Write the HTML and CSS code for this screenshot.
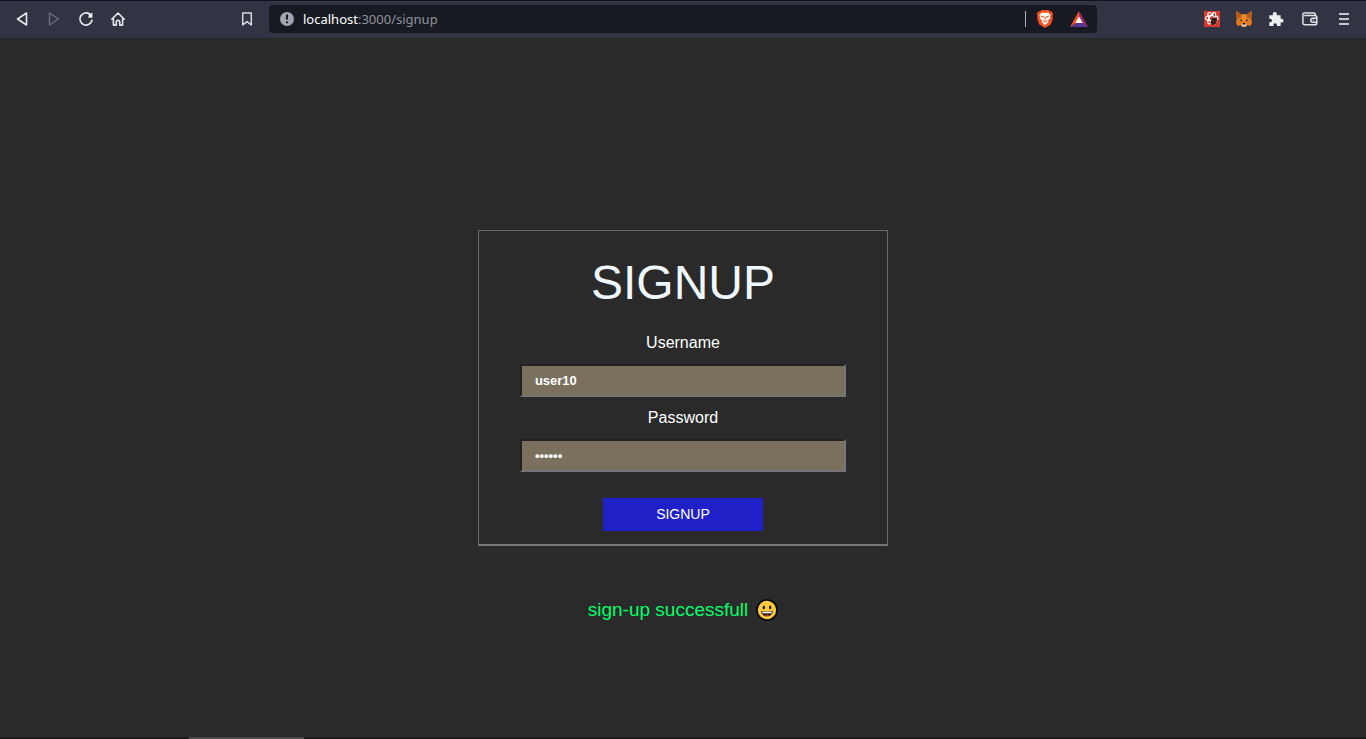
FILE: index.html
```html
<!DOCTYPE html>
<html lang="en">
<head>
<meta charset="utf-8">
<title>Signup</title>
<link rel="stylesheet" href="styles.css">
</head>
<body>
<header class="toolbar">
  <nav class="nav-buttons" aria-label="Browser navigation">
    <button class="icon-button" type="button" aria-label="Back">
      <svg viewBox="0 0 16 16"><path d="M12.500 2v12L3.500 8z" fill="none" stroke="#e8e9ec" stroke-width="1.6" stroke-linejoin="round"/></svg>
    </button>
    <button class="icon-button" type="button" aria-label="Forward">
      <svg viewBox="0 0 16 16"><path d="M3.500 2v12L12.500 8z" fill="none" stroke="#6a6c79" stroke-width="1.5" stroke-linejoin="round"/></svg>
    </button>
    <button class="icon-button" type="button" aria-label="Reload">
      <svg viewBox="0 0 16 16"><path d="M14 9.3A6.1 6.1 0 1 1 11.8 3.2" fill="none" stroke="#e8e9ec" stroke-width="1.7" stroke-linecap="round"/><path d="M10.8 3.2L14.4 1.8v5h-4z" fill="#f1f2f4"/></svg>
    </button>
    <button class="icon-button" type="button" aria-label="Home">
      <svg viewBox="0 0 16 16"><path d="M1.8 8.2L8 2l6.2 6.2M3.4 7.4v6.7h2.9v-3.2a1.7 1.7 0 0 1 3.4 0v3.2h2.9V7.4" fill="none" stroke="#e8e9ec" stroke-width="1.6" stroke-linecap="round" stroke-linejoin="round"/></svg>
    </button>
  </nav>
  <button class="icon-button bookmark" type="button" aria-label="Bookmark">
    <svg viewBox="0 0 16 16"><path d="M3.7 1.9h8.6v12L8 10.6l-4.3 3.3z" fill="none" stroke="#d9dade" stroke-width="1.5" stroke-linejoin="round"/></svg>
  </button>
  <div class="address">
    <svg class="site-info" viewBox="0 0 16 16" aria-hidden="true"><circle cx="8" cy="8" r="7" fill="#a2a5b0"/><path d="M8 3.6v5M8 10.4v1.8" stroke="#171a22" stroke-width="2"/></svg>
    <span class="url"><span class="host">localhost</span>:3000/signup</span>
    <span class="divider"></span>
    <button class="icon-button shield" type="button" aria-label="Shields">
      <svg viewBox="0 0 18 18"><path d="M5.5 0h7l1.5 1.6 1.8-.2L17.2 4l-.7 2 .4 2.2-2.1 6.3L9 18l-5.800-3.500L1.100 8.200 1.500 6l-.7-2 1.400-2.600 1.800.2z" fill="#f4511e"/><path d="M9 3l3-.4L14.800 5.200l-.7 1.300.2 1.500-2.300 2.600.5 1.100L9 15.200l-3.500-3.500.5-1.100L3.700 8l.2-1.500-.7-1.300L6 2.600z" fill="#fff"/><path d="M4.800 6l2.700.8-.7 1.200M13.200 6l-2.700.8.700 1.200M9 6.800v3.700M6.800 10.500L9 12.200l2.200-1.700" fill="none" stroke="#f4511e"/></svg>
    </button>
    <button class="icon-button rewards" type="button" aria-label="Rewards">
      <svg viewBox="0 0 18 16"><path d="M9 0L0 16l9-5.400z" fill="#f4511e"/><path d="M9 0l9 16-9-5.400z" fill="#a52b72"/><path d="M0 16h18l-6-4H6z" fill="#58338f"/><path d="M9 5.500l3.700 6.500H5.300z" fill="#fff"/></svg>
    </button>
  </div>
  <div class="extensions">
    <button class="icon-button" type="button" aria-label="React developer tools">
      <svg viewBox="0 0 16 16"><path d="M0 0h16v16H0z" fill="#d93a2f"/><g fill="none" stroke="#fff" stroke-width="1.200"><ellipse cx="7.800" cy="7.200" rx="6.300" ry="2.500"/><ellipse cx="7.800" cy="7.200" rx="6.300" ry="2.500" transform="rotate(60 7.800 7.200)"/><ellipse cx="7.800" cy="7.200" rx="6.300" ry="2.500" transform="rotate(120 7.800 7.200)"/></g><ellipse cx="9.800" cy="10.300" rx="2.700" ry="3.800" transform="rotate(28 9.800 10.300)" fill="#28191a"/><path d="M6.500 8l6 5M12.500 7.500L8 13M10 5.500l1-1.500" stroke="#28191a"/><path d="M8.300 9.500l3 2" stroke="#d93a2f" stroke-width=".6"/></svg>
    </button>
    <button class="icon-button" type="button" aria-label="MetaMask">
      <svg viewBox="0 0 16 16"><path d="M.5 0l5 3.500h5l5-3.500.5 4-.8 4 .8 3.500-1.500 3.500-3-.8L9.800 16H6.200l-1.700-1.800-3 .8L0 11.500.8 8 0 4z" fill="#e37a22"/><path d="M.5 0l5 3.500L4.800 7 .8 7.500 0 4zM15.500 0l-5 3.500.7 3.500 4 .5.8-3.500z" fill="#b45b1c"/><path d="M5.500 3.500h5L9.800 10H6.200z" fill="#f18a28"/><path d="M3.500 9l2.700-.4-.5 2zM12.500 9l-2.700-.4.500 2z" fill="#263343"/><path d="M6 12h4l.5 2-1 1.500h-3l-1-1.500z" fill="#d8c9bc"/><path d="M6.700 12h2.600v1.500H6.700z" fill="#18191e"/></svg>
    </button>
    <button class="icon-button" type="button" aria-label="Extensions">
      <svg viewBox="0 0 16 16"><path d="M1.300 4.200h3.500V3a2 2 0 0 1 4 0v1.200h3.800v3.600h1a1.900 1.900 0 0 1 0 3.800h-1v3.500H9v-1a1.800 1.800 0 0 0-3.600 0v1H1.300v-3.900h1a1.700 1.700 0 0 0 0-3.400h-1z" fill="#eeeff1"/></svg>
    </button>
    <button class="icon-button spaced" type="button" aria-label="Wallet">
      <svg viewBox="0 0 16 16"><path d="M13.200 4.500V3.200a1.200 1.200 0 0 0-1.200-1.200H2.400A1.500 1.500 0 0 0 .9 3.500v8.300a2 2 0 0 0 2 2h10a1.900 1.900 0 0 0 1.900-1.900V6.500a2 2 0 0 0-2-2H2.200M14.800 7.200h-4a2 2 0 0 0 0 4h4" fill="none" stroke="#e1e2e6" stroke-width="1.500"/><path d="M10.800 9.200h1" stroke="#e1e2e6" stroke-width="1.200"/></svg>
    </button>
    <button class="icon-button spaced" type="button" aria-label="Menu">
      <svg viewBox="0 0 16 16"><path d="M3 3h10M3 8h10M3 13h10" stroke="#c5c7cd" stroke-width="2"/></svg>
    </button>
  </div>
</header>
<main class="page">
  <form class="card">
    <h1 class="title">SIGNUP</h1>
    <label class="label" for="username">Username</label>
    <input class="field" id="username" type="text" value="user10">
    <label class="label" for="password">Password</label>
    <input class="field" id="password" type="password" value="secret">
    <button class="submit" type="button">SIGNUP</button>
  </form>
  <p class="message" role="status">sign-up successfull
    <svg class="smile" viewBox="0 0 22 22" role="img" aria-label="Grinning face"><circle cx="11" cy="11" r="10" fill="#ffc83d" stroke="#050505" stroke-width="1.600"/><ellipse cx="7.800" cy="8.500" rx="1.100" ry="1.900" fill="#171717"/><ellipse cx="14.200" cy="8.500" rx="1.100" ry="1.900" fill="#171717"/><path d="M5.200 12h11.600c0 3-2.600 5.300-5.800 5.300S5.200 15 5.200 12z" fill="#24130f"/><path d="M6.300 12.500h9.400v1.800H6.300z" fill="#fff"/><path d="M8.600 16.200c1.400-1 3.400-1 4.800 0-1.300.8-3.500.8-4.800 0z" fill="#e8432f"/></svg>
  </p>
</main>
<footer class="taskbar"><span class="task"></span></footer>
</body>
</html>
```
FILE: styles.css
```css
* {
  box-sizing: border-box;
}

body {
  display: flex;
  flex-direction: column;
  min-height: 100vh;
  margin: 0;
  background: #2a2a2a;
  color: #fff;
  font-family: "Liberation Sans", Arial, sans-serif;
}

.toolbar {
  display: flex;
  align-items: center;
  height: 38px;
  padding: 0 14px 1px;
  border-top: 1px solid #11121d;
  background: #323443;
}

.nav-buttons,
.extensions {
  display: flex;
  gap: 16px;
}

.extensions {
  margin-left: auto;
}

.icon-button {
  display: block;
  flex: none;
  width: 16px;
  height: 16px;
  padding: 0;
  border: 0;
  background: none;
}

.icon-button svg {
  display: block;
  width: 100%;
  height: 100%;
}

.spaced {
  margin-left: 2px;
}

.bookmark {
  margin-left: 113px;
}

.address {
  display: flex;
  align-items: center;
  flex: 0 1 828px;
  height: 28px;
  margin-left: 14px;
  padding: 0 9px 0 10px;
  border-radius: 4px;
  background: #171a22;
}

.site-info {
  width: 16px;
  height: 16px;
  margin-right: 8px;
}

.url {
  flex: 1;
  color: #91939a;
  font: 13px/20px "Noto Sans", sans-serif;
}

.host {
  color: #fff;
}

.divider {
  width: 1px;
  height: 16px;
  background: #b3b5bb;
}

.shield {
  width: 18px;
  height: 18px;
  margin-left: 10px;
}

.rewards {
  width: 18px;
  margin-left: 16px;
}

.page {
  display: flex;
  flex: 1;
  flex-direction: column;
  align-items: center;
  padding-top: 192px;
}

.card {
  display: flex;
  flex-direction: column;
  align-items: center;
  width: 30%;
  padding: 25px 0 13px;
  border: 1px solid #696969;
  border-bottom: 2px solid #777;
}

.title {
  margin: 0 0 24px;
  color: #f0f8ff;
  font-size: 48px;
  font-weight: 400;
  line-height: 54px;
}

.label {
  font-size: 16px;
  line-height: 18px;
}

.field {
  width: 80%;
  height: 33px;
  margin: 12px 0;
  padding: 0 13px;
  border: 2px solid;
  border-color: #212121 #767676 #767676 #212121;
  border-radius: 0;
  background: #7b6f5d;
  color: #fff;
  font: bold 13px/16px "Liberation Sans", Arial, sans-serif;
}

.submit {
  width: 160px;
  height: 33px;
  margin-top: 14px;
  padding: 0 0 2px;
  border: 0;
  background: #2020c8;
  color: #fff;
  font: 14px/16px "Liberation Sans", Arial, sans-serif;
}

.message {
  display: flex;
  align-items: center;
  gap: 8px;
  margin: 53px 0 0;
  color: #00ff6a;
  font-size: 19px;
  line-height: 22px;
}

.smile {
  width: 22px;
  height: 22px;
}

.taskbar {
  height: 2px;
  padding-left: 189px;
  background: #1b1b1b;
}

.task {
  display: block;
  width: 115px;
  height: 2px;
  background: #4a4a4a;
}
```
